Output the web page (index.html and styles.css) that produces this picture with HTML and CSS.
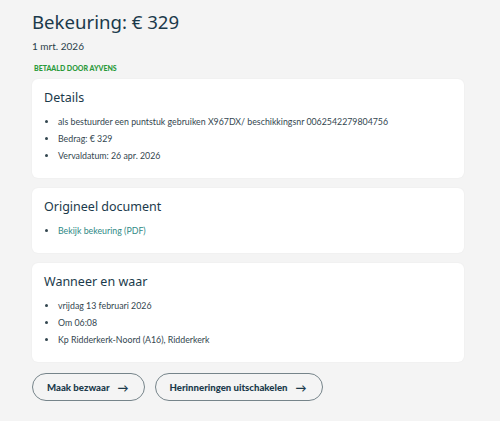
FILE: index.html
```html
<!DOCTYPE html>
<html lang="nl">
<head>
<meta charset="utf-8">
<link rel="stylesheet" href="styles.css">
</head>
<body>
<main class="page">
  <h1 class="title">Bekeuring: € 329</h1>
  <p class="date">1 mrt. 2026</p>
  <span class="badge">BETAALD DOOR AYVENS</span>

  <section class="card">
    <h2 class="card-title">Details</h2>
    <ul class="list">
      <li>als bestuurder een puntstuk gebruiken X967DX/ beschikkingsnr 0062542279804756</li>
      <li>Bedrag: € 329</li>
      <li>Vervaldatum: 26 apr. 2026</li>
    </ul>
  </section>

  <section class="card">
    <h2 class="card-title">Origineel document</h2>
    <ul class="list">
      <li><a class="link" href="#">Bekijk bekeuring (PDF)</a></li>
    </ul>
  </section>

  <section class="card">
    <h2 class="card-title">Wanneer en waar</h2>
    <ul class="list">
      <li>vrijdag 13 februari 2026</li>
      <li>Om 06:08</li>
      <li>Kp Ridderkerk-Noord (A16), Ridderkerk</li>
    </ul>
  </section>

  <div class="actions">
    <button class="btn">Maak bezwaar <span class="arrow">→</span></button>
    <button class="btn">Herinneringen uitschakelen <span class="arrow">→</span></button>
  </div>
</main>
</body>
</html>
```

FILE: styles.css
```css
* { box-sizing: border-box; }
html, body {
  margin: 0;
  padding: 0;
  background: #f4f4f4;
}
body {
  font-family: Lato, "Liberation Sans", sans-serif;
  color: #1f3845;
}
.page {
  width: 432px;
  margin-left: 32px;
  padding-top: 9px;
  display: flex;
  flex-direction: column;
}
.title {
  margin: 0;
  font-family: "Noto Sans", sans-serif;
  font-weight: 400;
  font-size: 18.6px;
  line-height: 26px;
  color: #1b3a4b;
}
.date {
  margin: 4px 0 0;
  font-size: 10px;
  line-height: 14px;
  color: #2a3f4a;
}
.badge {
  align-self: flex-start;
  margin: 10px 0 0 2px;
  font-size: 7px;
  font-weight: 900;
  line-height: 10px;
  color: #2a9a3a;
}
.card {
  background: #fff;
  border-radius: 6px;
  padding: 9px 12px 14px;
  box-shadow: 0 0 2px rgba(0,0,0,0.05);
  margin-top: 10px;
}
.card:first-of-type { margin-top: 6px; }
.card-title {
  margin: 0;
  font-family: "Noto Sans", sans-serif;
  font-weight: 400;
  font-size: 12.5px;
  line-height: 20px;
  color: #1b3a4b;
}
.list {
  margin: 5px 0 0;
  padding: 0 0 0 14px;
  font-size: 8.8px;
  line-height: 17px;
  color: #33464f;
}
.link {
  color: #2f8a86;
  text-decoration: none;
}
.actions {
  display: flex;
  gap: 10px;
  margin-top: 11px;
}
.btn {
  display: flex;
  align-items: center;
  gap: 8px;
  height: 28px;
  padding: 0 15px 0 14px;
  border: 1px solid #76848a;
  border-radius: 14px;
  background: transparent;
  font-family: Lato, sans-serif;
  font-weight: 900;
  font-size: 9.6px;
  color: #1b3a4b;
}
.arrow {
  font-size: 11px;
  font-weight: 700;
}
```
